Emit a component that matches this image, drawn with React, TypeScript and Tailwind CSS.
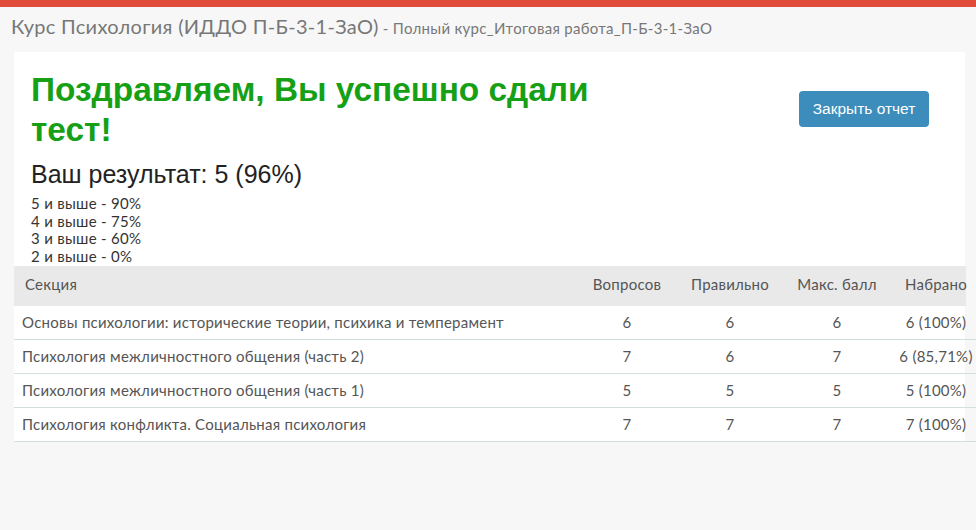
const sections = [
  { name: 'Основы психологии: исторические теории, психика и темперамент', q: 6, ok: 6, max: 6, got: '6 (100%)' },
  { name: 'Психология межличностного общения (часть 2)', q: 7, ok: 6, max: 7, got: '6 (85,71%)' },
  { name: 'Психология межличностного общения (часть 1)', q: 5, ok: 5, max: 5, got: '5 (100%)' },
  { name: 'Психология конфликта. Социальная психология', q: 7, ok: 7, max: 7, got: '7 (100%)' },
];

const grades = ['5 и выше - 90%', '4 и выше - 75%', '3 и выше - 60%', '2 и выше - 0%'];

export default function App() {
  return (
    <div className="min-h-[530px] w-[976px] overflow-hidden bg-[#f7f7f7] font-['Lato',sans-serif]">
      <div className="h-[7px] bg-[#e04b3a]" />
      <div className="px-[11px] pt-[4px] h-[45px] text-[#777] tracking-[0.3px]">
        <span className="text-[20px]">Курс Психология (ИДДО П-Б-3-1-ЗаО)</span>
        <span className="text-[15px]"> - Полный курс_Итоговая работа_П-Б-3-1-ЗаО</span>
      </div>
      <div className="ml-[14px] w-[951px] bg-white">
        <div className="flex items-start justify-between pl-[17px] pr-[36px] pt-[18px]">
          <div className="w-[600px]">
            <h1 className="font-['Liberation_Sans',sans-serif] text-[33.4px] font-bold leading-[40px] text-[#16a016]">
              Поздравляем, Вы успешно сдали тест!
            </h1>
            <div className="mt-[9px] font-['Liberation_Sans',sans-serif] text-[25px] leading-[30px] text-[#222]">
              Ваш результат: 5 (96%)
            </div>
            <div className="mt-[6px] text-[15px] leading-[17.7px] text-[#333] tracking-[0.3px]">
              {grades.map((g) => (
                <div key={g}>{g}</div>
              ))}
            </div>
          </div>
          <button className="mt-[21px] h-[36px] w-[130px] rounded-[4px] bg-[#3c8dbc] font-['Liberation_Sans',sans-serif] text-[15.5px] text-white">
            Закрыть отчет
          </button>
        </div>
        <table className="w-[962px] table-fixed border-collapse text-[15px] text-[#555] tracking-[0.25px]">
          <thead>
            <tr className="h-[40px]">
              <th className="bg-[#e9e9e9] pb-[3px] pl-[11px] text-left font-normal">Секция</th>
              <th className="w-[110px] bg-[#e9e9e9] pb-[3px] text-center font-normal">Вопросов</th>
              <th className="w-[96px] bg-[#e9e9e9] pb-[3px] text-center font-normal">Правильно</th>
              <th className="w-[118px] bg-[#e9e9e9] pb-[3px] text-center font-normal">Макс. балл</th>
              <th className="w-[80px] bg-[linear-gradient(to_right,#e9e9e9_70px,transparent_70px)] pb-[3px] text-center font-normal whitespace-nowrap">
                Набрано
              </th>
            </tr>
          </thead>
          <tbody>
            {sections.map((s) => (
              <tr key={s.name} className="h-[34px] border-b border-[#d2dfdf]">
                <td className="pb-[1px] pl-[8px]">{s.name}</td>
                <td className="pb-[1px] text-center">{s.q}</td>
                <td className="pb-[1px] text-center">{s.ok}</td>
                <td className="pb-[1px] text-center">{s.max}</td>
                <td className="pb-[1px] text-center whitespace-nowrap">{s.got}</td>
              </tr>
            ))}
          </tbody>
        </table>
      </div>
    </div>
  );
}
